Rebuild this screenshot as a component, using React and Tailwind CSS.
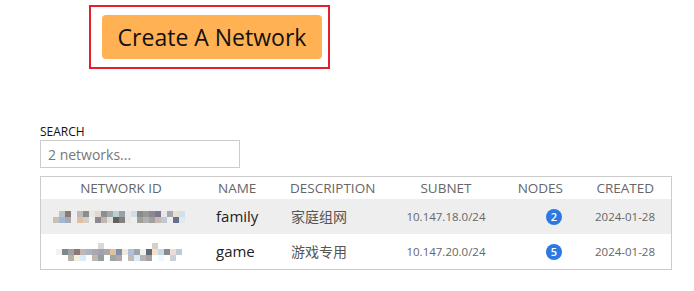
import React from 'react';

const font = { fontFamily: '"Open Sans", "Noto Sans CJK SC", sans-serif' };

const blur1 = [
  [null, '#b8c4c8', '#8a7a78', null, '#b8bcc0', '#8c8c8c', '#e8e8e0', '#e0d8d0', '#8a9090', '#a0a8a8', '#b8d0d0', '#9aa0a8', '#e8e8e8', '#d0dce8', '#8a8a88', '#989898', '#8a8890', '#7a7890', '#e8e8e8', '#a8a8b0', '#e8e0d0', '#d0e0ec'],
  ['#c8c0b8', '#a0b8d8', '#a8a8b0', null, '#e0c0a0', '#d0d0c8', null, '#8a8890', '#c0b8b0', '#e0e0e0', '#606060', '#888078', '#e8e8e8', null, '#a0a098', '#b0b0b0', '#a0a0a0', '#c8b8b0', '#c0c8d0', null, '#687088', '#e0e8f0'],
];

const row2top = Array(21).fill(null);
row2top[7] = '#d8d8d8';
row2top[16] = '#d8d0c8';

const blur2 = [
  row2top,
  ['#f4f4ec', '#7a8890', '#a0a0a0', '#8a7878', '#c0b8b0', '#a8b4c0', '#a8a8b0', '#a0a4a8', '#a8a8a8', '#e0c0a0', '#8090a8', '#f0e8e0', '#b0c0d8', '#a0a4a8', '#f0f0f0', '#606870', '#f0e0d0', '#c8d8e0', '#8a8890', '#e8e0d8', '#c0c8d8'],
  [null, null, '#b8b0a8', '#f0f0e0', '#d8ecf8', null, '#c0b8b0', '#90a0a0', null, '#a0a4a8', '#b0a8a8', null, '#c0bcb8', '#d8ecf8', '#b0b4b8', '#a8a0a0', null, '#f0f8ff', null, '#c8d0dc', null],
];

const Pixels = ({ rows }) => (
  <div className="flex flex-col">
    {rows.map((r, i) => (
      <div key={i} className="flex">
        {r.map((c, j) => (
          <div key={j} className="w-[6px] h-[6px]" style={{ background: c || 'transparent' }} />
        ))}
      </div>
    ))}
  </div>
);

const networks = [
  { pix: blur1, name: 'family', desc: '家庭组网', subnet: '10.147.18.0/24', nodes: 2, created: '2024-01-28', bg: 'bg-[#eeeeee]' },
  { pix: blur2, name: 'game', desc: '游戏专用', subnet: '10.147.20.0/24', nodes: 5, created: '2024-01-28', bg: 'bg-white' },
];

const grid = 'grid grid-cols-[160px_74px_118px_106px_72px_100px] items-center';

export default function App() {
  return (
    <div className="w-[694px] h-[291px] bg-white text-[#222]" style={font}>
      <div className="pt-[5px] pl-[89px]">
        <div className="w-[241px] h-[64px] border-2 border-[#e5202e] pt-[8px] pl-[11px]">
          <button className="w-[220px] h-[44px] rounded-[4px] bg-[#ffb153] text-[23px] text-[#111] leading-none">
            Create A Network
          </button>
        </div>
      </div>

      <div className="pl-[40px] pt-[55px]">
        <div className="text-[12px] leading-[15px] text-[#111]">SEARCH</div>
        <input
          className="mt-[1px] w-[200px] h-[28px] border border-[#cccccc] px-[7px] text-[14px] outline-none placeholder:text-[#777]"
          placeholder="2 networks..."
          style={font}
        />
        <div className="mt-[8px] w-[632px] border border-[#cccccc]">
          <div className={`${grid} h-[22px] text-[13.5px] text-[#666]`}>
            <div className="text-center">NETWORK ID</div>
            <div className="pl-[17px]">NAME</div>
            <div className="pl-[15px]">DESCRIPTION</div>
            <div className="text-center">SUBNET</div>
            <div className="text-right pr-[8px]">NODES</div>
            <div className="text-right pr-[17px]">CREATED</div>
          </div>
          {networks.map((n, i) => (
            <div key={i} className={`${grid} h-[35px] ${n.bg}`}>
              <div className="flex justify-center pr-[4px]">
                <Pixels rows={n.pix} />
              </div>
              <div className="pl-[15px] text-[15px] text-[#222]">{n.name}</div>
              <div className="pl-[16px] text-[14px] text-[#555]">{n.desc}</div>
              <div className="text-center text-[11.5px] text-[#666]">{n.subnet}</div>
              <div className="flex justify-end pr-[9px]">
                <span className="w-[16px] h-[16px] rounded-full bg-[#2a7ae2] text-white text-[11px] font-semibold flex items-center justify-center leading-none">
                  {n.nodes}
                </span>
              </div>
              <div className="text-right pr-[16px] text-[11.5px] text-[#666]">{n.created}</div>
            </div>
          ))}
        </div>
      </div>
    </div>
  );
}
